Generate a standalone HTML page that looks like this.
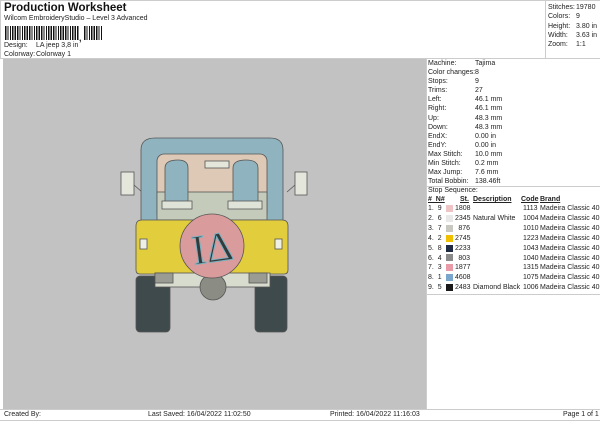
<!DOCTYPE html>
<html><head><style>
*{margin:0;padding:0;box-sizing:border-box}
body{width:600px;height:424px;background:#fff;font-family:"Liberation Sans",Arial,sans-serif;color:#222;position:relative;overflow:hidden;font-size:7px}
.a{position:absolute;white-space:nowrap}
.bc{position:absolute;top:26px;height:14px;background:repeating-linear-gradient(90deg,#111 0 1.3px,#fff 1.3px 2.4px)}
</style></head><body>
<div class="a" style="left:0;top:0;width:600px;height:59px;border:1px solid #ccc;border-right:none"></div>
<div class="a" style="left:4px;top:2px;font-size:11.5px;font-weight:bold;color:#111">Production Worksheet</div>
<div class="a" style="left:4px;top:15px">Wilcom EmbroideryStudio – Level 3 Advanced</div>
<div class="bc" style="left:5px;width:74px"></div>
<div class="a" style="left:79px;top:33px;font-weight:bold;font-size:9px">,</div>
<div class="bc" style="left:84px;width:18px"></div>
<div class="a" style="left:4px;top:42px">Design:</div><div class="a" style="left:36px;top:42px">LA jeep 3,8 in</div>
<div class="a" style="left:4px;top:51px">Colorway:</div><div class="a" style="left:36px;top:51px">Colorway 1</div>
<div class="a" style="left:545px;top:0;width:55px;height:59px;border-left:1px solid #ccc"></div>
<div class="a" style="left:548px;top:3px;line-height:9.3px">Stitches:<br>Colors:<br>Height:<br>Width:<br>Zoom:</div>
<div class="a" style="left:576px;top:3px;line-height:9.3px">19780<br>9<br>3.80 in<br>3.63 in<br>1:1</div>
<div class="a" style="left:3px;top:59px;width:423px;height:350px;background:#c2c2c2"></div>
<div class="a" style="left:426px;top:59px;width:174px;height:350px;border-left:1px solid #ccc"></div>
<div class="a" style="left:428px;top:59px;line-height:9.1px">Machine:<br>Color changes:<br>Stops:<br>Trims:<br>Left:<br>Right:<br>Up:<br>Down:<br>EndX:<br>EndY:<br>Max Stitch:<br>Min Stitch:<br>Max Jump:<br>Total Bobbin:</div>
<div class="a" style="left:475px;top:59px;line-height:9.1px">Tajima<br>8<br>9<br>27<br>46.1 mm<br>46.1 mm<br>48.3 mm<br>48.3 mm<br>0.00 in<br>0.00 in<br>10.0 mm<br>0.2 mm<br>7.6 mm<br>138.46ft</div>
<div class="a" style="left:426px;top:186px;width:174px;border-top:1px solid #ccc"></div>
<div class="a" style="left:428px;top:187px">Stop Sequence:</div>
<div class="a" style="left:428px;top:196px;font-weight:bold;text-decoration:underline">#&nbsp;&nbsp;N#</div>
<div class="a" style="left:460px;top:196px;font-weight:bold;text-decoration:underline">St.</div>
<div class="a" style="left:473px;top:196px;font-weight:bold;text-decoration:underline">Description</div>
<div class="a" style="left:521px;top:196px;font-weight:bold;text-decoration:underline">Code</div>
<div class="a" style="left:540px;top:196px;font-weight:bold;text-decoration:underline">Brand</div>
<div class="a" style="left:428px;top:204px;line-height:9.9px">1.&nbsp;&nbsp;9<br>2.&nbsp;&nbsp;6<br>3.&nbsp;&nbsp;7<br>4.&nbsp;&nbsp;2<br>5.&nbsp;&nbsp;8<br>6.&nbsp;&nbsp;4<br>7.&nbsp;&nbsp;3<br>8.&nbsp;&nbsp;1<br>9.&nbsp;&nbsp;5</div>
<div class="a" style="left:446px;top:205px;width:7px">
<div style="height:7px;background:#efc4c4;margin-bottom:2.9px"></div><div style="height:7px;background:#e8e8e8;margin-bottom:2.9px"></div><div style="height:7px;background:#c8c8c0;margin-bottom:2.9px"></div><div style="height:7px;background:#f0c000;margin-bottom:2.9px"></div><div style="height:7px;background:#1e2a44;margin-bottom:2.9px"></div><div style="height:7px;background:#8a8a8a;margin-bottom:2.9px"></div><div style="height:7px;background:#e89aa6;margin-bottom:2.9px"></div><div style="height:7px;background:#7aa6cc;margin-bottom:2.9px"></div><div style="height:7px;background:#1a1a1a"></div></div>
<div class="a" style="left:455px;top:204px;line-height:9.9px;text-align:right;width:15px">1808<br>2345<br>876<br>2745<br>2233<br>803<br>1877<br>4608<br>2483</div>
<div class="a" style="left:473px;top:204px;line-height:9.9px">&nbsp;<br>Natural White<br><br><br><br><br><br><br>Diamond Black</div>
<div class="a" style="left:523px;top:204px;line-height:9.9px">1113<br>1004<br>1010<br>1223<br>1043<br>1040<br>1315<br>1075<br>1006</div>
<div class="a" style="left:540px;top:204px;line-height:9.9px">Madeira Classic 40<br>Madeira Classic 40<br>Madeira Classic 40<br>Madeira Classic 40<br>Madeira Classic 40<br>Madeira Classic 40<br>Madeira Classic 40<br>Madeira Classic 40<br>Madeira Classic 40</div>
<div class="a" style="left:426px;top:294px;width:174px;border-top:1px solid #ccc"></div>
<svg class="a" style="left:0;top:0" width="600" height="424">
<g stroke="#555" stroke-width="0.8">
<line x1="134" y1="185" x2="142" y2="192"/><line x1="295" y1="185" x2="287" y2="192"/>
<rect x="121" y="172" width="13" height="23" fill="#e4e6dc"/>
<rect x="295" y="172" width="12" height="23" fill="#e4e6dc"/>
<rect x="136" y="276" width="34" height="56" rx="4" fill="#3f4a4c"/>
<rect x="255" y="276" width="32" height="56" rx="4" fill="#3f4a4c"/>
<path d="M141 222 V150 Q141 138 155 138 H270 Q283 138 283 150 V222 Z" fill="#8fb4bf"/>
<rect x="157" y="154" width="110" height="66" rx="7" fill="#ddc9b6"/>
<rect x="157" y="192" width="110" height="28" fill="#c5cbbb"/>
<path d="M165 205 V168 Q165 160 178 160 Q188 160 188 168 V205 Z" fill="#8fb4bf"/>
<path d="M233 205 V168 Q233 160 246 160 Q258 160 258 168 V205 Z" fill="#8fb4bf"/>
<rect x="162" y="201" width="30" height="8" fill="#dfe3d8"/><rect x="228" y="201" width="34" height="8" fill="#dfe3d8"/>
<rect x="205" y="161" width="24" height="7" fill="#e4e6dc"/>
<path d="M136 226 Q136 220 142 220 H282 Q288 220 288 226 V270 Q288 274 284 274 H140 Q136 274 136 270 Z" fill="#e2cd3c"/>
<rect x="140" y="239" width="7" height="10" fill="#eef0e6"/><rect x="275" y="239" width="7" height="10" fill="#eef0e6"/>
<rect x="155" y="273" width="115" height="14" fill="#d8dccf"/>
<rect x="155" y="273" width="18" height="10" fill="#9a9c94"/><rect x="249" y="273" width="18" height="10" fill="#9a9c94"/>
<circle cx="213" cy="287" r="13" fill="#8b8d84"/>
<circle cx="212" cy="246" r="32" fill="#d99b9b"/>
</g>
<text x="212" y="262" text-anchor="middle" font-family="Liberation Serif,serif" font-size="42" fill="#34393a" stroke="#7ab0c0" stroke-width="1" transform="rotate(-8 212 246)">IΔ</text>
</svg>
<div class="a" style="left:0;top:409px;width:600px;height:12px;border-top:1px solid #ccc;border-bottom:1px solid #ccc"></div>
<div class="a" style="left:4px;top:411px">Created By:</div>
<div class="a" style="left:148px;top:411px">Last Saved: 16/04/2022 11:02:50</div>
<div class="a" style="left:330px;top:411px">Printed: 16/04/2022 11:16:03</div>
<div class="a" style="left:563px;top:411px">Page 1 of 1</div>
</body></html>
